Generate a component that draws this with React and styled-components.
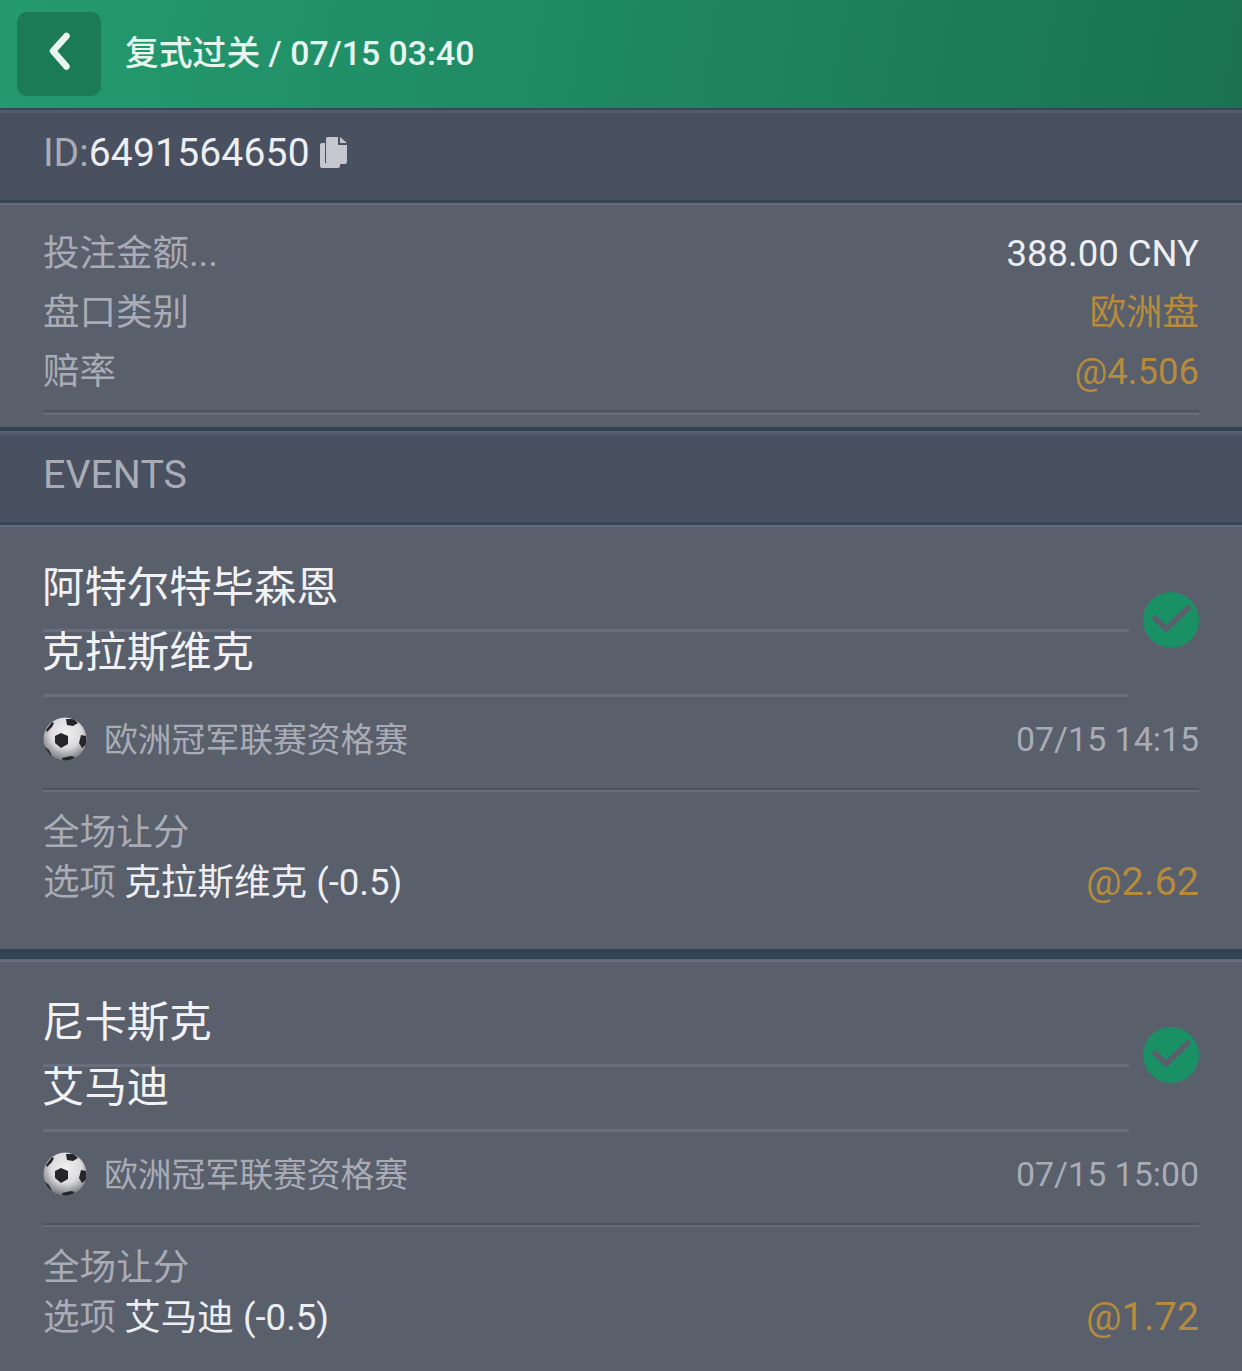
import React from "react";
import styled, { createGlobalStyle } from "styled-components";

const Global = createGlobalStyle`
  html, body { margin: 0; padding: 0; background: #595f6b; }
  * { box-sizing: border-box; }
  body { font-family: Roboto, "Noto Sans CJK SC", sans-serif; }
`;
const Page = styled.div`
  width: 1242px; height: 1371px; overflow: hidden; background: #595f6b;
`;
const Header = styled.header`
  height: 110px; display: flex; align-items: center; gap: 24px;
  padding: 0 17px;
  background: linear-gradient(100deg, #249a6e 0%, #1f8a64 45%, #1a7252 100%);
  border-bottom: 2px solid #35475a;
`;
const BackButton = styled.div`
  width: 84px; height: 84px; border-radius: 10px; background: #1b7a58;
  display: flex; align-items: center; justify-content: center;
`;
const HeaderTitle = styled.h1`
  margin: 0; font-size: 33.8px; font-weight: 500; color: #e8f5ef; line-height: 1;
`;
const IdBar = styled.div`
  height: 93px; display: flex; align-items: center; padding: 0 43px 6px;
  background: #495060; border-top: 3px solid #535a6b; border-bottom: 3px solid #354555;
  font-size: 39px; line-height: 1; color: #a9acb6;
`;
const IdValue = styled.span`color: #eceef2; letter-spacing: 0.2px;`;
const CopyIcon = styled.svg`margin-left: 10px; margin-top: -2px;`;
const Summary = styled.section`
  height: 224px; padding: 19px 43px 0; background: #595f6b;
  border-top: 2px solid #666c79;
`;
const SummaryRow = styled.div`
  display: flex; justify-content: space-between; align-items: center;
  height: 59px; line-height: 59px; font-size: 36.5px; color: #a9acb6;
`;
const Value = styled.span`
  color: ${p => (p.$gold ? "#b68b3d" : "#eceef2")};
`;
const DoubleRule = styled.div`
  height: 5px; margin-top: 9px;
  border-top: 2px solid #4d5361; border-bottom: 2px solid #666c79;
`;
const Band = styled.div`
  height: ${p => p.$h}px; background: #324454; border-bottom: 1px solid #5f6573;
`;
const EventsBar = styled.div`
  height: 93px; display: flex; align-items: center; padding: 0 43px 7px;
  background: #495060; border-top: 3px solid #535a6b; border-bottom: 3px solid #354555;
  font-size: 39.4px; line-height: 1; color: #a9acb6;
`;
const EventCard = styled.article`
  height: ${p => p.$h}px; padding: 0 43px; background: #595f6b;
  border-top: 2px solid #666c79;
`;
const Teams = styled.div`
  display: flex; align-items: center; gap: 14px; padding-top: 38px;
`;
const TeamList = styled.div`flex: 1;`;
const Team = styled.div`
  height: ${p => (p.$first ? 67 : 65)}px;
  font-size: 42.4px;
  text-indent: -1px;
  line-height: ${p => (p.$first ? 46 : 42)}px;
  color: #f1f2f5;
  border-bottom: 3px solid #686e7b;
`;
const Check = styled.svg`flex: none; margin-top: -22px;`;
const League = styled.div`
  height: 93px; display: flex; align-items: center; padding-bottom: 8px;
  font-size: 33.8px; line-height: 1; color: #a9acb6;
  border-bottom: 2px solid #4d5361; box-shadow: 0 2px 0 #666c79;
`;
const LeagueName = styled.span`margin: 4px 0 0 17px; flex: 1;`;
const Kickoff = styled.span`font-size: 33.9px; margin-top: 2px;`;
const BallIcon = styled.svg`flex: none; filter: blur(0.4px);`;
const Market = styled.div`
  display: flex; justify-content: space-between; align-items: flex-end; padding-top: 18px;
`;
const MarketLines = styled.div`font-size: 36.6px; line-height: 50px; color: #a9acb6;`;
const Pick = styled.span`color: #eceef2; margin-left: 8px;`;
const Odds = styled.span`font-size: 39.7px; line-height: 52px; color: #b68b3d;`;

const Ball = ({ id }) => (
  <BallIcon width="44" height="44" viewBox="0 0 44 44">
    <defs>
      <radialGradient id={`shade${id}`} cx="52%" cy="36%" r="64%">
        <stop offset="0%" stopColor="#f0f0f0" />
        <stop offset="55%" stopColor="#dcdcde" />
        <stop offset="100%" stopColor="#77787e" />
      </radialGradient>
      <clipPath id={`clip${id}`}><circle cx="22" cy="22" r="21.5" /></clipPath>
    </defs>
    <circle cx="22" cy="22" r="21.5" fill={`url(#shade${id})`} />
    <g clipPath={`url(#clip${id})`} fill="#26262a">
      <polygon points="18,16 25,19 25,27 18,31 12,26 12,19" />
      <polygon points="23,2 31,2 35,6 30,9 24,8" />
      <polygon points="38,18 43,19 44,27 39,31 36,26" />
      <polygon points="3,13 9,5 11,6 9,10 4,15" />
      <polygon points="1,29 6,33 9,39 5,38 1,33" />
      <polygon points="19,41 28,39 32,40 27,44 20,44" />
    </g>
  </BallIcon>
);

const matches = [
  { a: "阿特尔特毕森恩", b: "克拉斯维克", time: "07/15 14:15", pick: "克拉斯维克 (-0.5)", odds: "@2.62", h: 424 },
  { a: "尼卡斯克", b: "艾马迪", time: "07/15 15:00", pick: "艾马迪 (-0.5)", odds: "@1.72", h: 411 },
];

export default function App() {
  return (
    <Page>
      <Global />
      <Header>
        <BackButton>
          <svg width="40" height="50" viewBox="0 0 40 50" fill="none">
            <path d="M27.5 7 L14 22 L27.5 37.5" stroke="#e8f5ef" strokeWidth="6.5" strokeLinecap="round" strokeLinejoin="round" />
          </svg>
        </BackButton>
        <HeaderTitle>复式过关 / 07/15 03:40</HeaderTitle>
      </Header>
      <IdBar>
        ID:<IdValue>6491564650</IdValue>
        <CopyIcon width="28" height="32" viewBox="0 0 28 32">
          <path fill="#c5c6ce" d="M2 6h3v20h15v3a2 2 0 0 1-2 2H2a2 2 0 0 1-2-2V8a2 2 0 0 1 2-2z" />
          <path fill="#c5c6ce" d="M8 0h10v8h9v17a2 2 0 0 1-2 2H8a2 2 0 0 1-2-2V2a2 2 0 0 1 2-2z" />
          <path fill="#c5c6ce" d="M20 0l7 6h-7z" />
        </CopyIcon>
      </IdBar>
      <Summary>
        <SummaryRow>投注金额...<Value>388.00 CNY</Value></SummaryRow>
        <SummaryRow>盘口类别<Value $gold>欧洲盘</Value></SummaryRow>
        <SummaryRow>赔率<Value $gold>@4.506</Value></SummaryRow>
        <DoubleRule />
      </Summary>
      <Band $h={5} />
      <EventsBar>EVENTS</EventsBar>
      {matches.map((m, i) => (
        <React.Fragment key={m.a}>
          {i > 0 && <Band $h={11} />}
          <EventCard $h={m.h}>
            <Teams>
              <TeamList>
                <Team $first>{m.a}</Team>
                <Team>{m.b}</Team>
              </TeamList>
              <Check width="56" height="56" viewBox="0 0 56 56">
                <circle cx="28" cy="28" r="28" fill="#1a9065" />
                <path d="M12 26 L23 37 L45 16" fill="none" stroke="#595f6b" strokeWidth="5.5" strokeLinecap="round" strokeLinejoin="round" />
              </Check>
            </Teams>
            <League>
              <Ball id={i} />
              <LeagueName>欧洲冠军联赛资格赛</LeagueName>
              <Kickoff>{m.time}</Kickoff>
            </League>
            <Market>
              <MarketLines>
                全场让分<br />
                选项<Pick>{m.pick}</Pick>
              </MarketLines>
              <Odds>{m.odds}</Odds>
            </Market>
          </EventCard>
        </React.Fragment>
      ))}
    </Page>
  );
}
